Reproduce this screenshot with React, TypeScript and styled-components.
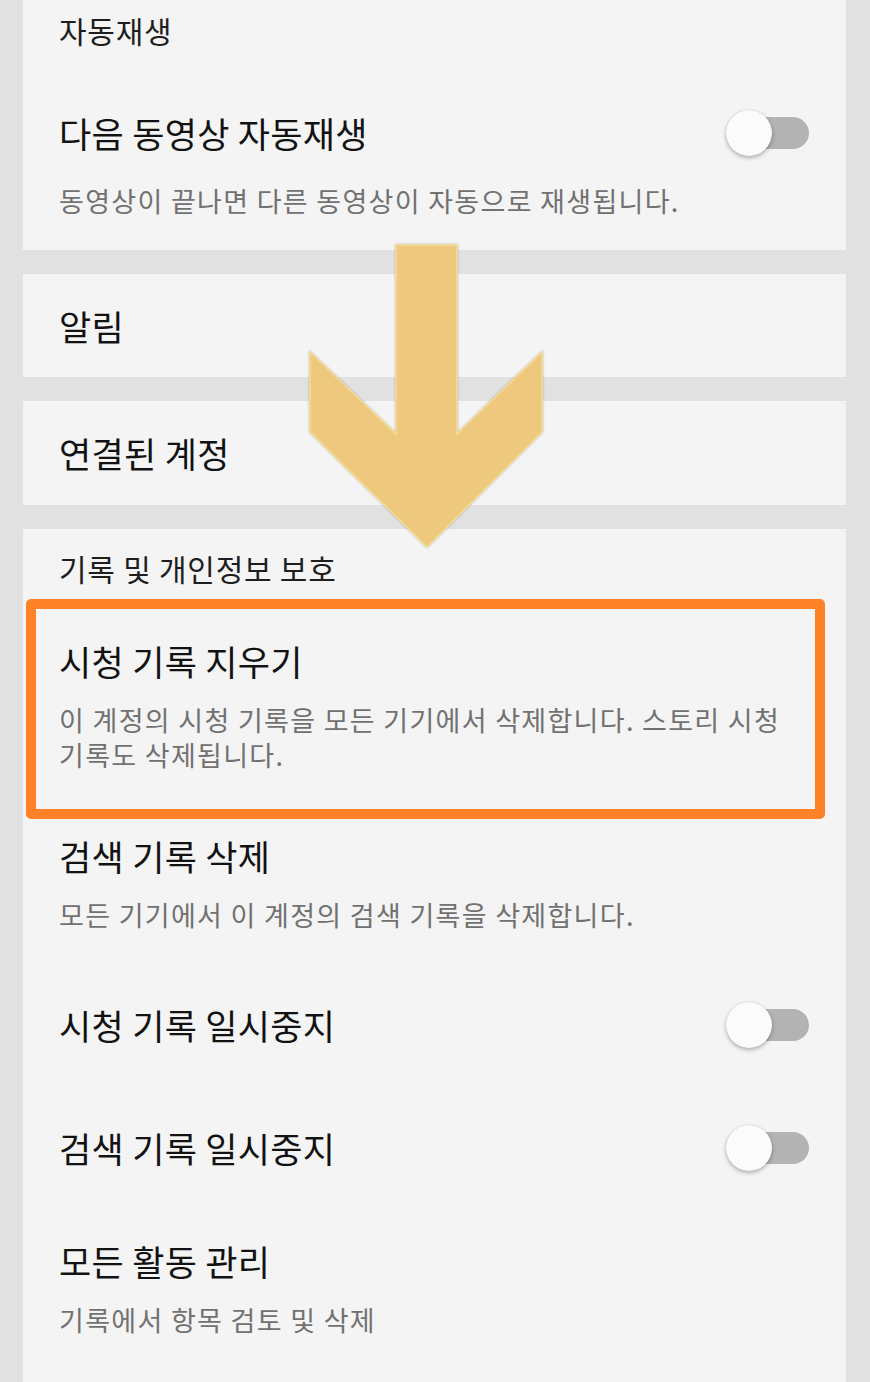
import React from "react";
import styled, { createGlobalStyle } from "styled-components";

const GlobalStyle = createGlobalStyle`
  html, body {
    margin: 0;
    padding: 0;
    background: #e1e1e1;
  }
  body {
    font-family: "Noto Sans CJK KR", "Noto Sans", sans-serif;
    -webkit-font-smoothing: antialiased;
  }
`;

const Page = styled.div`
  position: relative;
  width: 870px;
  min-height: 1382px;
  box-sizing: border-box;
  padding: 0 24px 0 23px;
  display: flex;
  flex-direction: column;
  gap: 24px;
  overflow: hidden;
`;

const Card = styled.section<{ $grow?: boolean; $height?: number }>`
  background: #f4f4f4;
  display: flex;
  flex-direction: column;
  ${(p) => (p.$grow ? "flex: 1;" : "")}
  ${(p) => (p.$height ? `height: ${p.$height}px;` : "")}
`;

const SectionHeader = styled.h2<{ $height: number }>`
  margin: 0;
  height: ${(p) => p.$height}px;
  line-height: ${(p) => p.$height}px;
  padding: 0 37px 0 36px;
  font-size: 30px;
  font-weight: 400;
  color: #1e1e1e;
  letter-spacing: 0.75px;
`;

const Item = styled.div<{ $pt: number; $pb: number }>`
  position: relative;
  padding: ${(p) => p.$pt}px 37px ${(p) => p.$pb}px 36px;
  display: flex;
  flex-direction: column;
`;

const CenteredItem = styled.div`
  flex: 1;
  display: flex;
  align-items: center;
  padding: 0 37px 0 36px;
`;

const TitleRow = styled.div<{ $height?: number }>`
  display: flex;
  align-items: center;
  justify-content: space-between;
  min-height: ${(p) => p.$height ?? 44}px;
`;

const Title = styled.div`
  font-size: 35px;
  line-height: 44px;
  font-weight: 400;
  color: #121212;
  letter-spacing: 0.3px;
`;

const Description = styled.p<{ $gap?: number }>`
  margin: ${(p) => p.$gap ?? 19}px 0 0;
  font-size: 27px;
  line-height: 35px;
  color: #717171;
  letter-spacing: 1.3px;
`;

const Switch = styled.span`
  position: relative;
  flex: none;
  width: 82px;
  height: 32px;
  border-radius: 16px;
  background: #b3b3b3;
`;

const Thumb = styled.span`
  position: absolute;
  left: -1px;
  top: 50%;
  width: 46px;
  height: 46px;
  margin-top: -23px;
  border-radius: 50%;
  background: #fbfbfb;
  box-shadow: 0 2px 4px rgba(0, 0, 0, 0.28), 0 0 1px rgba(0, 0, 0, 0.2);
`;

const HighlightFrame = styled.div`
  position: absolute;
  left: 3px;
  right: 21px;
  top: -8px;
  bottom: -17px;
  border: 10px solid #ff8128;
  border-radius: 5px;
  pointer-events: none;
`;

const ArrowMark = styled.svg`
  position: absolute;
  left: 305px;
  top: 240px;
  width: 245px;
  height: 312px;
  overflow: visible;
  filter: drop-shadow(0 0 1px rgba(120, 100, 60, 0.45));
`;

const Toggle = () => (
  <Switch>
    <Thumb />
  </Switch>
);

export default function App() {
  return (
    <>
      <GlobalStyle />
      <Page>
        <Card $height={250}>
          <SectionHeader $height={60}>자동재생</SectionHeader>
          <Item $pt={51} $pb={31}>
            <TitleRow>
              <Title>다음 동영상 자동재생</Title>
              <Toggle />
            </TitleRow>
            <Description $gap={28}>동영상이 끝나면 다른 동영상이 자동으로 재생됩니다.</Description>
          </Item>
        </Card>

        <Card $height={103}>
          <CenteredItem>
            <Title>알림</Title>
          </CenteredItem>
        </Card>

        <Card $height={104}>
          <CenteredItem>
            <Title>연결된 계정</Title>
          </CenteredItem>
        </Card>

        <Card $grow>
          <SectionHeader $height={78}>기록 및 개인정보 보호</SectionHeader>
          <Item $pt={32} $pb={30}>
            <Title>시청 기록 지우기</Title>
            <Description>
              이 계정의 시청 기록을 모든 기기에서 삭제합니다. 스토리 시청 기록도 삭제됩니다.
            </Description>
            <HighlightFrame />
          </Item>
          <Item $pt={32} $pb={31}>
            <Title>검색 기록 삭제</Title>
            <Description>모든 기기에서 이 계정의 검색 기록을 삭제합니다.</Description>
          </Item>
          <Item $pt={31} $pb={31}>
            <TitleRow $height={62}>
              <Title>시청 기록 일시중지</Title>
              <Toggle />
            </TitleRow>
          </Item>
          <Item $pt={30} $pb={30}>
            <TitleRow $height={62}>
              <Title>검색 기록 일시중지</Title>
              <Toggle />
            </TitleRow>
          </Item>
          <Item $pt={30} $pb={40}>
            <Title>모든 활동 관리</Title>
            <Description>기록에서 항목 검토 및 삭제</Description>
          </Item>
        </Card>

        <ArrowMark viewBox="0 0 245 312" aria-hidden="true">
          <polygon
            points="91,5 152,5 152,194 237,112 237,192 122,307 5,192 5,112 91,194"
            fill="#edc87d"
            stroke="#f6dc98"
            strokeWidth="1.5"
            strokeLinejoin="miter"
          />
        </ArrowMark>
      </Page>
    </>
  );
}
